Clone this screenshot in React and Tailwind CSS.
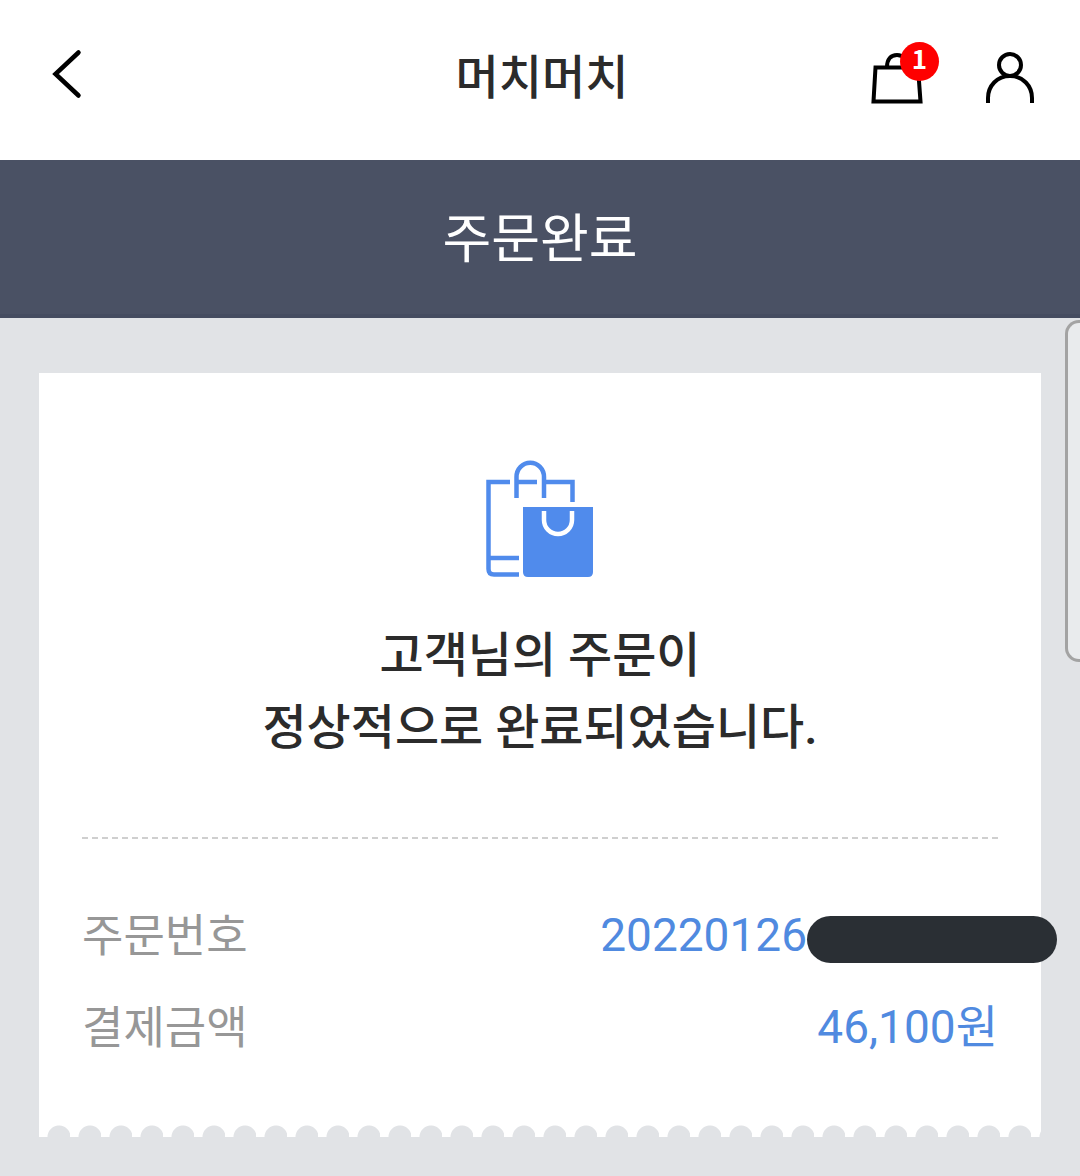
const orderRows = [
  { label: "주문번호", value: "20220126", masked: true },
  { label: "결제금액", value: "46,100원", masked: false },
];

function BackIcon() {
  return (
    <svg width="32" height="52" viewBox="0 0 32 52" fill="none" stroke="#000" strokeWidth="4.5" strokeLinecap="round">
      <path d="M28.5 4.5 L5.5 26 L28.5 47.5" />
    </svg>
  );
}

function CartIcon() {
  return (
    <svg width="52" height="52" viewBox="0 0 52 52" fill="none" stroke="#000" strokeWidth="4">
      <path d="M4.5 15.5 H47 L49.5 49.5 H2.5 Z" />
      <path d="M16 15 C16 7 20 3 26 3 C32 3 36 7 36 15" />
    </svg>
  );
}

function UserIcon() {
  return (
    <svg width="48" height="52" viewBox="0 0 48 52" fill="none" stroke="#000" strokeWidth="4">
      <circle cx="24" cy="13" r="11" />
      <path d="M2 51 V46 C2 34 11 24 24 24 C37 24 46 34 46 46 V51" />
    </svg>
  );
}

function ShoppingBags() {
  return (
    <svg width="108" height="118" viewBox="0 0 108 118" fill="none" stroke="#508bec" strokeWidth="4.5">
      <path d="M24 22 H2.5 V109 Q2.5 114.5 8 114.5 H33" />
      <path d="M2 98 H33" />
      <path d="M30.5 38 V17 A13.5 14 0 0 1 58 17 V38" />
      <path d="M30 22 H51" />
      <path d="M58 22 H86.5 V42" />
      <path d="M37 47 H107 V112 Q107 117 102 117 H42 Q37 117 37 112 Z" fill="#508bec" stroke="none" />
      <path d="M58 51 V60 A14 14 0 0 0 86 60 V51" stroke="#fff" />
    </svg>
  );
}

export default function App() {
  return (
    <div className="relative min-h-screen bg-[#e1e3e6] font-['Roboto','Noto_Sans_CJK_KR',sans-serif] text-[#2b2b2b]">
      {/* HEADER */}
      <header className="grid h-40 grid-cols-[1fr_auto_1fr] items-start bg-white pr-[46px] pl-[50px]">
        <button type="button" aria-label="뒤로" className="mt-12 justify-self-start">
          <BackIcon />
        </button>
        <h1 className="mt-[46px] text-[47px] leading-16 font-medium">머치머치</h1>
        <div className="mt-13 flex items-start gap-[63px] justify-self-end">
          <button type="button" aria-label="장바구니" className="relative">
            <CartIcon />
            <span className="absolute -top-[10px] -right-4 flex size-[39px] items-center justify-center rounded-full bg-[#fe0000] pb-2 font-['Noto_Sans_CJK_KR',sans-serif] text-[26px] leading-8 font-bold text-white">
              1
            </span>
          </button>
          <button type="button" aria-label="마이페이지">
            <UserIcon />
          </button>
        </div>
      </header>

      {/* PAGE TITLE */}
      <div className="border-b-4 border-[#454c60] bg-[#4a5164] pt-10 pb-[34px]">
        <h2 className="text-center text-[53px] leading-20 text-white">주문완료</h2>
      </div>

      <main className="px-[39px] pt-[55px] pb-[39px]">
        <section className="bg-white">
          <div className="px-[43px] pt-[87px] pb-[52px]">
            <div className="flex justify-center">
              <ShoppingBags />
            </div>
            <p className="mt-[42px] text-center text-[48px] leading-[72px] font-medium">
              고객님의 주문이
              <br />
              정상적으로 완료되었습니다.
            </p>

            <dl className="mt-[73px] border-t-2 border-dashed border-[#cfcfcf] pt-[50px]">
              {orderRows.map((row) => (
                <div key={row.label} className="flex h-[92px] items-center justify-between text-[46px] leading-[92px]">
                  <dt className="pt-1 text-[45px] text-[#979797]">{row.label}</dt>
                  <dd className="flex items-center text-[#508ae0]">
                    {row.value}
                    {row.masked && (
                      <span className="mt-2 -mr-[59px] h-[47px] w-[250px] rounded-full bg-[#2a2f34]" />
                    )}
                  </dd>
                </div>
              ))}
            </dl>
          </div>
          {/* receipt edge */}
          <div className="h-3 bg-[radial-gradient(circle_at_20px_12px,#e1e3e6_11px,transparent_12px)] bg-[length:31px_12px] bg-repeat-x" />
        </section>
      </main>

      {/* scroll handle */}
      <div className="absolute top-80 right-0 h-[342px] w-[15px] rounded-l-[14px] border-3 border-r-0 border-[#a3a3a3] bg-[#e9ebed]" />
    </div>
  );
}
